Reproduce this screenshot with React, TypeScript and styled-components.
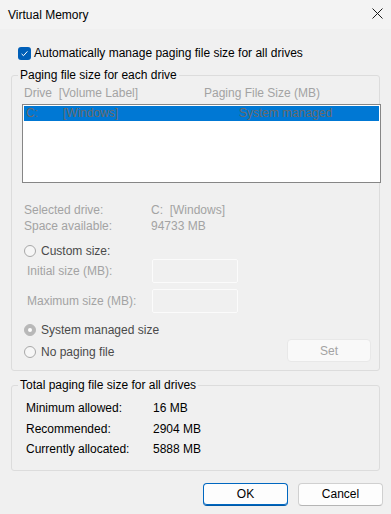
import React from 'react';
import styled, { createGlobalStyle } from 'styled-components';

const FONT = `"Liberation Sans", Arial, sans-serif`;

const Global = createGlobalStyle`
  html, body { margin: 0; padding: 0; background: #f0f0f0; }
  body { font-family: ${FONT}; font-size: 12px; color: #000; }
  * { box-sizing: border-box; }
`;

const Window = styled.div`
  width: 391px;
  height: 514px;
  display: flex;
  flex-direction: column;
  background: #f0f0f0;
  overflow: hidden;
`;

const TitleBar = styled.div`
  height: 29px;
  background: #f3f3f3;
  display: flex;
  align-items: center;
  justify-content: space-between;
  padding: 0 8px;
`;

const Title = styled.span`
  font-size: 12px;
  line-height: 16px;
  color: #000;
`;

const Content = styled.div`
  padding: 0 11px;
  display: flex;
  flex-direction: column;
`;

const CheckRow = styled.label`
  margin-top: 16px;
  height: 16px;
  display: flex;
  align-items: center;
  gap: 3px;
  padding-left: 7px;
  line-height: 16px;
`;

const CheckBox = styled.span`
  width: 13px;
  height: 13px;
  border-radius: 3px;
  background: #005fb8;
  display: flex;
  align-items: center;
  justify-content: center;
`;

const GroupBox = styled.fieldset<{ $mt: number; $pb: number }>`
  margin: ${(p) => p.$mt}px 0 0;
  padding: 0 0 ${(p) => p.$pb}px;
  border: 1px solid #dcdcdc;
  border-radius: 3px;
  min-width: 0;
`;

const Legend = styled.legend`
  margin-left: 6px;
  padding: 0 2px;
  line-height: 16px;
  font-size: 12px;
  color: #000;
`;

const HeaderRow = styled.div`
  margin-top: 2px;
  padding-left: 12px;
  display: grid;
  grid-template-columns: 180px 1fr;
  line-height: 16px;
  color: #a3a3a3;
`;

const ListBox = styled.div`
  margin: 3px 0 0 10px;
  width: 359px;
  height: 79px;
  border: 1px solid #868686;
  background: #fff;
  padding: 1px;
`;

const ListRow = styled.div`
  height: 15px;
  line-height: 15px;
  background: #0078d4;
  color: #6a6a6a;
  display: grid;
  grid-template-columns: 37px 176px 1fr;
  padding-left: 2px;
  white-space: nowrap;
`;

const InfoGrid = styled.div`
  margin-top: 19px;
  padding-left: 12px;
  display: grid;
  grid-template-columns: 127px 1fr;
  line-height: 16px;
  color: #a3a3a3;
`;

const RadioRow = styled.label<{ $mt: number }>`
  margin-top: ${(p) => p.$mt}px;
  padding-left: 12px;
  height: 16px;
  display: flex;
  align-items: center;
  gap: 5px;
  color: #4a4a4a;
  line-height: 16px;
`;

const RadioDot = styled.span<{ $checked?: boolean }>`
  width: 12px;
  height: 12px;
  border-radius: 50%;
  flex: none;
  border: 1px solid ${(p) => (p.$checked ? '#b8b8b8' : '#a8a8a8')};
  background: ${(p) => (p.$checked ? '#b8b8b8' : '#f6f6f6')};
  display: flex;
  align-items: center;
  justify-content: center;
  &::after {
    content: '';
    display: ${(p) => (p.$checked ? 'block' : 'none')};
    width: 4px;
    height: 4px;
    border-radius: 50%;
    background: #fff;
  }
`;

const SizeRow = styled.div<{ $mt: number }>`
  margin-top: ${(p) => p.$mt}px;
  padding-left: 15px;
  display: grid;
  grid-template-columns: 125px 86px;
  align-items: center;
  height: 24px;
  color: #a3a3a3;
  line-height: 16px;
`;

const SizeInput = styled.div`
  height: 24px;
  border: 1px solid #fbfbfb;
  border-radius: 2px;
  background: #f0f0f0;
`;

const BottomRow = styled.div`
  margin-top: 1px;
  height: 23px;
  display: flex;
  align-items: center;
  justify-content: space-between;
  padding-right: 8px;
`;

const BottomRadio = styled(RadioRow)`
  padding-top: 3px;
`;

const SetButton = styled.div`
  width: 84px;
  height: 23px;
  border: 1px solid #e8e8e8;
  border-radius: 4px;
  background: #f9f9f9;
  color: #a3a3a3;
  display: flex;
  align-items: center;
  justify-content: center;
  line-height: 16px;
`;

const TotalGrid = styled.div`
  margin-top: 5px;
  padding-left: 14px;
  display: grid;
  grid-template-columns: 127px 1fr;
  grid-auto-rows: 20.5px;
  align-items: center;
  line-height: 16px;
`;

const Footer = styled.div`
  margin-top: 12px;
  padding-right: 8px;
  display: flex;
  justify-content: flex-end;
  gap: 10px;
`;

const Button = styled.button<{ $primary?: boolean }>`
  width: 85px;
  height: 23px;
  padding: 0;
  font-family: ${FONT};
  font-size: 12px;
  color: #000;
  background: #fdfdfd;
  border-radius: 4px;
  border: 1px solid ${(p) => (p.$primary ? '#0067c0' : '#d0d0d0')};
  border-bottom-color: ${(p) => (p.$primary ? '#0059a8' : '#b5b5b5')};
  ${(p) => (p.$primary ? 'box-shadow: inset 0 -1px 0 #0067c0;' : '')}
`;

const CloseIcon = () => (
  <svg width="11" height="11" viewBox="0 0 11 11" style={{ marginTop: -2 }}>
    <path d="M0.5 0.5 L10.5 10.5 M10.5 0.5 L0.5 10.5" stroke="#1a1a1a" strokeWidth="1" fill="none" />
  </svg>
);

const CheckMark = () => (
  <svg width="13" height="13" viewBox="0 0 13 13">
    <path d="M3.6 6.9 L5.5 8.7 L9.4 4.4" stroke="#fff" strokeWidth="1" fill="none" />
  </svg>
);

export default function App() {
  return (
    <Window>
      <Global />
      <TitleBar>
        <Title>Virtual Memory</Title>
        <CloseIcon />
      </TitleBar>
      <Content>
        <CheckRow>
          <CheckBox>
            <CheckMark />
          </CheckBox>
          Automatically manage paging file size for all drives
        </CheckRow>

        <GroupBox $mt={6} $pb={8}>
          <Legend>Paging file size for each drive</Legend>
          <HeaderRow>
            <span>Drive&nbsp; [Volume Label]</span>
            <span>Paging File Size (MB)</span>
          </HeaderRow>
          <ListBox>
            <ListRow>
              <span>C:</span>
              <span>[Windows]</span>
              <span>System managed</span>
            </ListRow>
          </ListBox>
          <InfoGrid>
            <span>Selected drive:</span>
            <span>C:&nbsp; [Windows]</span>
            <span>Space available:</span>
            <span>94733 MB</span>
          </InfoGrid>
          <RadioRow $mt={9}>
            <RadioDot />
            Custom size:
          </RadioRow>
          <SizeRow $mt={0}>
            <span>Initial size (MB):</span>
            <SizeInput />
          </SizeRow>
          <SizeRow $mt={6}>
            <span>Maximum size (MB):</span>
            <SizeInput />
          </SizeRow>
          <RadioRow $mt={9}>
            <RadioDot $checked />
            System managed size
          </RadioRow>
          <BottomRow>
            <BottomRadio $mt={0}>
              <RadioDot />
              No paging file
            </BottomRadio>
            <SetButton>Set</SetButton>
          </BottomRow>
        </GroupBox>

        <GroupBox $mt={6} $pb={10}>
          <Legend>Total paging file size for all drives</Legend>
          <TotalGrid>
            <span>Minimum allowed:</span>
            <span>16 MB</span>
            <span>Recommended:</span>
            <span>2904 MB</span>
            <span>Currently allocated:</span>
            <span>5888 MB</span>
          </TotalGrid>
        </GroupBox>
      </Content>
      <Footer>
        <Button $primary>OK</Button>
        <Button>Cancel</Button>
      </Footer>
    </Window>
  );
}
